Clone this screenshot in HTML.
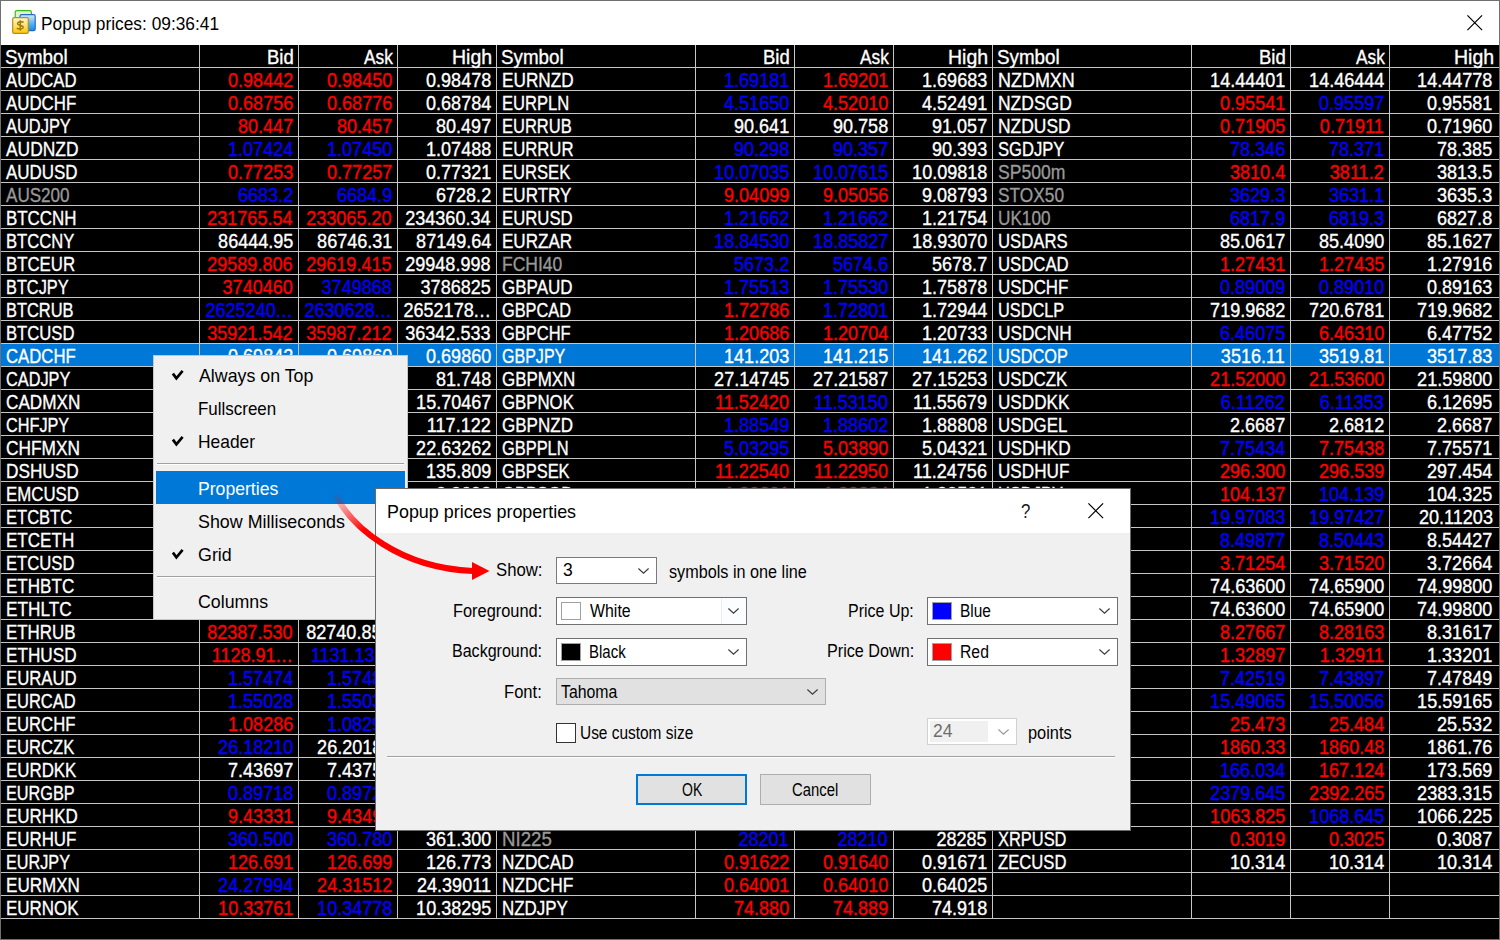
<!DOCTYPE html>
<html><head><meta charset="utf-8"><title>Popup prices</title>
<style>
*{box-sizing:border-box;margin:0;padding:0}
html,body{width:1500px;height:940px;overflow:hidden;background:#000}
body{font-family:"Liberation Sans",sans-serif;position:relative}
#win{position:absolute;left:0;top:0;width:1500px;height:940px;background:#000;overflow:hidden}
.bd{position:absolute;background:#707070}
#tb{position:absolute;left:1px;top:1px;width:1498px;height:44px;background:#fff}
.t{position:absolute;white-space:nowrap;display:block}
.hl{position:absolute;left:1px;width:1498px;height:1px;background:#c6c6c6}
.vl{position:absolute;top:45px;width:1px;height:874px;background:#c6c6c6}
.s,.n{position:absolute;height:22px;line-height:22px;font-size:20px;white-space:nowrap;color:#fff}
.s{transform-origin:0 50%;transform:scaleX(0.843)}
.n{transform-origin:100% 50%;transform:scaleX(0.903);text-align:right}
.k,.n{-webkit-text-stroke:0.35px}
.e{letter-spacing:0.8px}
.r{color:#f00}.b{color:#00f}.g{color:#808080}
.a{position:absolute;display:block}
.x{position:absolute;white-space:nowrap;transform-origin:0 50%}
</style></head>
<body>
<div id="win">
<div style="position:absolute;left:1px;top:344px;width:1498px;height:22px;background:#0078d7"></div>
<div class="hl" style="top:67px"></div>
<div class="hl" style="top:90px"></div>
<div class="hl" style="top:113px"></div>
<div class="hl" style="top:136px"></div>
<div class="hl" style="top:159px"></div>
<div class="hl" style="top:182px"></div>
<div class="hl" style="top:205px"></div>
<div class="hl" style="top:228px"></div>
<div class="hl" style="top:251px"></div>
<div class="hl" style="top:274px"></div>
<div class="hl" style="top:297px"></div>
<div class="hl" style="top:320px"></div>
<div class="hl" style="top:343px"></div>
<div class="hl" style="top:366px"></div>
<div class="hl" style="top:389px"></div>
<div class="hl" style="top:412px"></div>
<div class="hl" style="top:435px"></div>
<div class="hl" style="top:458px"></div>
<div class="hl" style="top:481px"></div>
<div class="hl" style="top:504px"></div>
<div class="hl" style="top:527px"></div>
<div class="hl" style="top:550px"></div>
<div class="hl" style="top:573px"></div>
<div class="hl" style="top:596px"></div>
<div class="hl" style="top:619px"></div>
<div class="hl" style="top:642px"></div>
<div class="hl" style="top:665px"></div>
<div class="hl" style="top:688px"></div>
<div class="hl" style="top:711px"></div>
<div class="hl" style="top:734px"></div>
<div class="hl" style="top:757px"></div>
<div class="hl" style="top:780px"></div>
<div class="hl" style="top:803px"></div>
<div class="hl" style="top:826px"></div>
<div class="hl" style="top:849px"></div>
<div class="hl" style="top:872px"></div>
<div class="hl" style="top:895px"></div>
<div class="hl" style="top:918px"></div>
<div class="vl" style="left:199px"></div>
<div class="vl" style="left:298px"></div>
<div class="vl" style="left:397px"></div>
<div class="vl" style="left:496px"></div>
<div class="vl" style="left:695px"></div>
<div class="vl" style="left:794px"></div>
<div class="vl" style="left:893px"></div>
<div class="vl" style="left:992px"></div>
<div class="vl" style="left:1191px"></div>
<div class="vl" style="left:1290px"></div>
<div class="vl" style="left:1389px"></div>
<div class="x k" style="left:6.20px;top:69.07px;font-size:20px;line-height:22px;height:22px;color:#fff;transform:scaleX(0.8357)">AUDCAD</div>
<div class="n r" style="right:1207.0px;top:69px">0.98442</div>
<div class="n r" style="right:1108.0px;top:69px">0.98450</div>
<div class="n " style="right:1009.0px;top:69px">0.98478</div>
<div class="x k" style="left:6.20px;top:92.07px;font-size:20px;line-height:22px;height:22px;color:#fff;transform:scaleX(0.8422)">AUDCHF</div>
<div class="n r" style="right:1207.0px;top:92px">0.68756</div>
<div class="n r" style="right:1108.0px;top:92px">0.68776</div>
<div class="n " style="right:1009.0px;top:92px">0.68784</div>
<div class="x k" style="left:6.20px;top:115.07px;font-size:20px;line-height:22px;height:22px;color:#fff;transform:scaleX(0.8215)">AUDJPY</div>
<div class="n r" style="right:1207.0px;top:115px">80.447</div>
<div class="n r" style="right:1108.0px;top:115px">80.457</div>
<div class="n " style="right:1009.0px;top:115px">80.497</div>
<div class="x k" style="left:6.20px;top:138.07px;font-size:20px;line-height:22px;height:22px;color:#fff;transform:scaleX(0.8699)">AUDNZD</div>
<div class="n b" style="right:1207.0px;top:138px">1.07424</div>
<div class="n b" style="right:1108.0px;top:138px">1.07450</div>
<div class="n " style="right:1009.0px;top:138px">1.07488</div>
<div class="x k" style="left:6.20px;top:161.07px;font-size:20px;line-height:22px;height:22px;color:#fff;transform:scaleX(0.8476)">AUDUSD</div>
<div class="n r" style="right:1207.0px;top:161px">0.77253</div>
<div class="n r" style="right:1108.0px;top:161px">0.77257</div>
<div class="n " style="right:1009.0px;top:161px">0.77321</div>
<div class="x k" style="left:6.20px;top:184.07px;font-size:20px;line-height:22px;height:22px;color:#999999;transform:scaleX(0.8541)">AUS200</div>
<div class="n b" style="right:1207.0px;top:184px">6683.2</div>
<div class="n b" style="right:1108.0px;top:184px">6684.9</div>
<div class="n " style="right:1009.0px;top:184px">6728.2</div>
<div class="x k" style="left:6.05px;top:207.07px;font-size:20px;line-height:22px;height:22px;color:#fff;transform:scaleX(0.8457)">BTCCNH</div>
<div class="n r" style="right:1207.0px;top:207px">231765.54</div>
<div class="n r" style="right:1108.0px;top:207px">233065.20</div>
<div class="n " style="right:1009.0px;top:207px">234360.34</div>
<div class="x k" style="left:6.07px;top:230.07px;font-size:20px;line-height:22px;height:22px;color:#fff;transform:scaleX(0.8296)">BTCCNY</div>
<div class="n " style="right:1207.0px;top:230px">86444.95</div>
<div class="n " style="right:1108.0px;top:230px">86746.31</div>
<div class="n " style="right:1009.0px;top:230px">87149.64</div>
<div class="x k" style="left:6.06px;top:253.07px;font-size:20px;line-height:22px;height:22px;color:#fff;transform:scaleX(0.8400)">BTCEUR</div>
<div class="n r" style="right:1207.0px;top:253px">29589.806</div>
<div class="n r" style="right:1108.0px;top:253px">29619.415</div>
<div class="n " style="right:1009.0px;top:253px">29948.998</div>
<div class="x k" style="left:6.08px;top:276.07px;font-size:20px;line-height:22px;height:22px;color:#fff;transform:scaleX(0.8160)">BTCJPY</div>
<div class="n r" style="right:1207.0px;top:276px">3740460</div>
<div class="n b" style="right:1108.0px;top:276px">3749868</div>
<div class="n " style="right:1009.0px;top:276px">3786825</div>
<div class="x k" style="left:6.08px;top:299.07px;font-size:20px;line-height:22px;height:22px;color:#fff;transform:scaleX(0.8210)">BTCRUB</div>
<div class="n b" style="right:1207.0px;top:299px">2625240<span class="e">...</span></div>
<div class="n b" style="right:1108.0px;top:299px">2630628<span class="e">...</span></div>
<div class="n " style="right:1009.0px;top:299px">2652178<span class="e">...</span></div>
<div class="x k" style="left:6.07px;top:322.07px;font-size:20px;line-height:22px;height:22px;color:#fff;transform:scaleX(0.8333)">BTCUSD</div>
<div class="n r" style="right:1207.0px;top:322px">35921.542</div>
<div class="n r" style="right:1108.0px;top:322px">35987.212</div>
<div class="n " style="right:1009.0px;top:322px">36342.533</div>
<div class="x k" style="left:5.71px;top:345.07px;font-size:20px;line-height:22px;height:22px;color:#fff;transform:scaleX(0.8360)">CADCHF</div>
<div class="n " style="right:1207.0px;top:345px">0.69842</div>
<div class="n " style="right:1108.0px;top:345px">0.69860</div>
<div class="n " style="right:1009.0px;top:345px">0.69860</div>
<div class="x k" style="left:5.74px;top:368.07px;font-size:20px;line-height:22px;height:22px;color:#fff;transform:scaleX(0.8147)">CADJPY</div>
<div class="n r" style="right:1207.0px;top:368px">81.702</div>
<div class="n r" style="right:1108.0px;top:368px">81.713</div>
<div class="n " style="right:1009.0px;top:368px">81.748</div>
<div class="x k" style="left:5.69px;top:391.07px;font-size:20px;line-height:22px;height:22px;color:#fff;transform:scaleX(0.8571)">CADMXN</div>
<div class="n b" style="right:1207.0px;top:391px">15.66540</div>
<div class="n b" style="right:1108.0px;top:391px">15.68310</div>
<div class="n " style="right:1009.0px;top:391px">15.70467</div>
<div class="x k" style="left:5.74px;top:414.07px;font-size:20px;line-height:22px;height:22px;color:#fff;transform:scaleX(0.8123)">CHFJPY</div>
<div class="n r" style="right:1207.0px;top:414px">116.998</div>
<div class="n r" style="right:1108.0px;top:414px">117.012</div>
<div class="n " style="right:1009.0px;top:414px">117.122</div>
<div class="x k" style="left:5.68px;top:437.07px;font-size:20px;line-height:22px;height:22px;color:#fff;transform:scaleX(0.8657)">CHFMXN</div>
<div class="n b" style="right:1207.0px;top:437px">22.43011</div>
<div class="n b" style="right:1108.0px;top:437px">22.46240</div>
<div class="n " style="right:1009.0px;top:437px">22.63262</div>
<div class="x k" style="left:6.04px;top:460.07px;font-size:20px;line-height:22px;height:22px;color:#fff;transform:scaleX(0.8614)">DSHUSD</div>
<div class="n r" style="right:1207.0px;top:460px">133.914</div>
<div class="n r" style="right:1108.0px;top:460px">134.514</div>
<div class="n " style="right:1009.0px;top:460px">135.809</div>
<div class="x k" style="left:6.06px;top:483.07px;font-size:20px;line-height:22px;height:22px;color:#fff;transform:scaleX(0.8412)">EMCUSD</div>
<div class="n " style="right:1207.0px;top:483px">0.0665</div>
<div class="n " style="right:1108.0px;top:483px">0.0695</div>
<div class="n " style="right:1009.0px;top:483px">0.0698</div>
<div class="x k" style="left:6.07px;top:506.07px;font-size:20px;line-height:22px;height:22px;color:#fff;transform:scaleX(0.8269)">ETCBTC</div>
<div class="n b" style="right:1207.0px;top:506px">0.00021</div>
<div class="n b" style="right:1108.0px;top:506px">0.00022</div>
<div class="n " style="right:1009.0px;top:506px">0.00022</div>
<div class="x k" style="left:6.05px;top:529.07px;font-size:20px;line-height:22px;height:22px;color:#fff;transform:scaleX(0.8526)">ETCETH</div>
<div class="n b" style="right:1207.0px;top:529px">0.00652</div>
<div class="n b" style="right:1108.0px;top:529px">0.00660</div>
<div class="n " style="right:1009.0px;top:529px">0.00665</div>
<div class="x k" style="left:6.07px;top:552.07px;font-size:20px;line-height:22px;height:22px;color:#fff;transform:scaleX(0.8333)">ETCUSD</div>
<div class="n r" style="right:1207.0px;top:552px">7.399</div>
<div class="n r" style="right:1108.0px;top:552px">7.449</div>
<div class="n " style="right:1009.0px;top:552px">7.521</div>
<div class="x k" style="left:6.05px;top:575.07px;font-size:20px;line-height:22px;height:22px;color:#fff;transform:scaleX(0.8526)">ETHBTC</div>
<div class="n b" style="right:1207.0px;top:575px">0.03136</div>
<div class="n b" style="right:1108.0px;top:575px">0.03141</div>
<div class="n " style="right:1009.0px;top:575px">0.03161</div>
<div class="x k" style="left:6.04px;top:598.07px;font-size:20px;line-height:22px;height:22px;color:#fff;transform:scaleX(0.8600)">ETHLTC</div>
<div class="n r" style="right:1207.0px;top:598px">7.46021</div>
<div class="n r" style="right:1108.0px;top:598px">7.47338</div>
<div class="n " style="right:1009.0px;top:598px">7.51210</div>
<div class="x k" style="left:6.05px;top:621.07px;font-size:20px;line-height:22px;height:22px;color:#fff;transform:scaleX(0.8457)">ETHRUB</div>
<div class="n r" style="right:1207.0px;top:621px">82387.530</div>
<div class="n " style="right:1108.0px;top:621px">82740.850</div>
<div class="n " style="right:1009.0px;top:621px">83610.155</div>
<div class="x k" style="left:6.04px;top:644.07px;font-size:20px;line-height:22px;height:22px;color:#fff;transform:scaleX(0.8580)">ETHUSD</div>
<div class="n r" style="right:1207.0px;top:644px">1128.91<span class="e">...</span></div>
<div class="n b" style="right:1108.0px;top:644px">1131.13<span class="e">...</span></div>
<div class="n " style="right:1009.0px;top:644px">1145.27<span class="e">...</span></div>
<div class="x k" style="left:6.06px;top:667.07px;font-size:20px;line-height:22px;height:22px;color:#fff;transform:scaleX(0.8373)">EURAUD</div>
<div class="n b" style="right:1207.0px;top:667px">1.57474</div>
<div class="n b" style="right:1108.0px;top:667px">1.57489</div>
<div class="n " style="right:1009.0px;top:667px">1.57731</div>
<div class="x k" style="left:6.07px;top:690.07px;font-size:20px;line-height:22px;height:22px;color:#fff;transform:scaleX(0.8253)">EURCAD</div>
<div class="n b" style="right:1207.0px;top:690px">1.55028</div>
<div class="n b" style="right:1108.0px;top:690px">1.55035</div>
<div class="n " style="right:1009.0px;top:690px">1.55403</div>
<div class="x k" style="left:6.07px;top:713.07px;font-size:20px;line-height:22px;height:22px;color:#fff;transform:scaleX(0.8317)">EURCHF</div>
<div class="n r" style="right:1207.0px;top:713px">1.08286</div>
<div class="n b" style="right:1108.0px;top:713px">1.08293</div>
<div class="n " style="right:1009.0px;top:713px">1.08394</div>
<div class="x k" style="left:6.07px;top:736.07px;font-size:20px;line-height:22px;height:22px;color:#fff;transform:scaleX(0.8296)">EURCZK</div>
<div class="n b" style="right:1207.0px;top:736px">26.18210</div>
<div class="n " style="right:1108.0px;top:736px">26.20180</div>
<div class="n " style="right:1009.0px;top:736px">26.24120</div>
<div class="x k" style="left:6.06px;top:759.07px;font-size:20px;line-height:22px;height:22px;color:#fff;transform:scaleX(0.8439)">EURDKK</div>
<div class="n " style="right:1207.0px;top:759px">7.43697</div>
<div class="n " style="right:1108.0px;top:759px">7.43755</div>
<div class="n " style="right:1009.0px;top:759px">7.43915</div>
<div class="x k" style="left:6.09px;top:782.07px;font-size:20px;line-height:22px;height:22px;color:#fff;transform:scaleX(0.8133)">EURGBP</div>
<div class="n b" style="right:1207.0px;top:782px">0.89718</div>
<div class="n b" style="right:1108.0px;top:782px">0.89725</div>
<div class="n " style="right:1009.0px;top:782px">0.90012</div>
<div class="x k" style="left:6.05px;top:805.07px;font-size:20px;line-height:22px;height:22px;color:#fff;transform:scaleX(0.8494)">EURHKD</div>
<div class="n r" style="right:1207.0px;top:805px">9.43331</div>
<div class="n r" style="right:1108.0px;top:805px">9.43493</div>
<div class="n " style="right:1009.0px;top:805px">9.44102</div>
<div class="x k" style="left:6.06px;top:828.07px;font-size:20px;line-height:22px;height:22px;color:#fff;transform:scaleX(0.8439)">EURHUF</div>
<div class="n b" style="right:1207.0px;top:828px">360.500</div>
<div class="n b" style="right:1108.0px;top:828px">360.780</div>
<div class="n " style="right:1009.0px;top:828px">361.300</div>
<div class="x k" style="left:6.09px;top:851.07px;font-size:20px;line-height:22px;height:22px;color:#fff;transform:scaleX(0.8103)">EURJPY</div>
<div class="n r" style="right:1207.0px;top:851px">126.691</div>
<div class="n r" style="right:1108.0px;top:851px">126.699</div>
<div class="n " style="right:1009.0px;top:851px">126.773</div>
<div class="x k" style="left:6.05px;top:874.07px;font-size:20px;line-height:22px;height:22px;color:#fff;transform:scaleX(0.8529)">EURMXN</div>
<div class="n b" style="right:1207.0px;top:874px">24.27994</div>
<div class="n r" style="right:1108.0px;top:874px">24.31512</div>
<div class="n " style="right:1009.0px;top:874px">24.39011</div>
<div class="x k" style="left:6.05px;top:897.07px;font-size:20px;line-height:22px;height:22px;color:#fff;transform:scaleX(0.8476)">EURNOK</div>
<div class="n r" style="right:1207.0px;top:897px">10.33761</div>
<div class="n b" style="right:1108.0px;top:897px">10.34778</div>
<div class="n " style="right:1009.0px;top:897px">10.38295</div>
<div class="x k" style="left:502.04px;top:69.07px;font-size:20px;line-height:22px;height:22px;color:#fff;transform:scaleX(0.8598)">EURNZD</div>
<div class="n b" style="right:711.0px;top:69px">1.69181</div>
<div class="n r" style="right:612.0px;top:69px">1.69201</div>
<div class="n " style="right:513.0px;top:69px">1.69683</div>
<div class="x k" style="left:502.07px;top:92.07px;font-size:20px;line-height:22px;height:22px;color:#fff;transform:scaleX(0.8291)">EURPLN</div>
<div class="n b" style="right:711.0px;top:92px">4.51650</div>
<div class="n r" style="right:612.0px;top:92px">4.52010</div>
<div class="n " style="right:513.0px;top:92px">4.52491</div>
<div class="x k" style="left:502.07px;top:115.07px;font-size:20px;line-height:22px;height:22px;color:#fff;transform:scaleX(0.8253)">EURRUB</div>
<div class="n " style="right:711.0px;top:115px">90.641</div>
<div class="n " style="right:612.0px;top:115px">90.758</div>
<div class="n " style="right:513.0px;top:115px">91.057</div>
<div class="x k" style="left:502.06px;top:138.07px;font-size:20px;line-height:22px;height:22px;color:#fff;transform:scaleX(0.8357)">EURRUR</div>
<div class="n b" style="right:711.0px;top:138px">90.298</div>
<div class="n b" style="right:612.0px;top:138px">90.357</div>
<div class="n " style="right:513.0px;top:138px">90.393</div>
<div class="x k" style="left:502.07px;top:161.07px;font-size:20px;line-height:22px;height:22px;color:#fff;transform:scaleX(0.8296)">EURSEK</div>
<div class="n b" style="right:711.0px;top:161px">10.07035</div>
<div class="n b" style="right:612.0px;top:161px">10.07615</div>
<div class="n " style="right:513.0px;top:161px">10.09818</div>
<div class="x k" style="left:502.05px;top:184.07px;font-size:20px;line-height:22px;height:22px;color:#fff;transform:scaleX(0.8525)">EURTRY</div>
<div class="n r" style="right:711.0px;top:184px">9.04099</div>
<div class="n r" style="right:612.0px;top:184px">9.05056</div>
<div class="n " style="right:513.0px;top:184px">9.08793</div>
<div class="x k" style="left:502.06px;top:207.07px;font-size:20px;line-height:22px;height:22px;color:#fff;transform:scaleX(0.8373)">EURUSD</div>
<div class="n b" style="right:711.0px;top:207px">1.21662</div>
<div class="n b" style="right:612.0px;top:207px">1.21662</div>
<div class="n " style="right:513.0px;top:207px">1.21754</div>
<div class="x k" style="left:502.05px;top:230.07px;font-size:20px;line-height:22px;height:22px;color:#fff;transform:scaleX(0.8525)">EURZAR</div>
<div class="n b" style="right:711.0px;top:230px">18.84530</div>
<div class="n b" style="right:612.0px;top:230px">18.85827</div>
<div class="n " style="right:513.0px;top:230px">18.93070</div>
<div class="x k" style="left:502.02px;top:253.07px;font-size:20px;line-height:22px;height:22px;color:#999999;transform:scaleX(0.8750)">FCHI40</div>
<div class="n b" style="right:711.0px;top:253px">5673.2</div>
<div class="n b" style="right:612.0px;top:253px">5674.6</div>
<div class="n " style="right:513.0px;top:253px">5678.7</div>
<div class="x k" style="left:501.70px;top:276.07px;font-size:20px;line-height:22px;height:22px;color:#fff;transform:scaleX(0.8500)">GBPAUD</div>
<div class="n b" style="right:711.0px;top:276px">1.75513</div>
<div class="n b" style="right:612.0px;top:276px">1.75530</div>
<div class="n " style="right:513.0px;top:276px">1.75878</div>
<div class="x k" style="left:501.73px;top:299.07px;font-size:20px;line-height:22px;height:22px;color:#fff;transform:scaleX(0.8175)">GBPCAD</div>
<div class="n r" style="right:711.0px;top:299px">1.72786</div>
<div class="n b" style="right:612.0px;top:299px">1.72801</div>
<div class="n " style="right:513.0px;top:299px">1.72944</div>
<div class="x k" style="left:501.73px;top:322.07px;font-size:20px;line-height:22px;height:22px;color:#fff;transform:scaleX(0.8238)">GBPCHF</div>
<div class="n r" style="right:711.0px;top:322px">1.20686</div>
<div class="n r" style="right:612.0px;top:322px">1.20704</div>
<div class="n " style="right:513.0px;top:322px">1.20733</div>
<div class="x k" style="left:501.75px;top:345.07px;font-size:20px;line-height:22px;height:22px;color:#fff;transform:scaleX(0.8019)">GBPJPY</div>
<div class="n " style="right:711.0px;top:345px">141.203</div>
<div class="n " style="right:612.0px;top:345px">141.215</div>
<div class="n " style="right:513.0px;top:345px">141.262</div>
<div class="x k" style="left:501.70px;top:368.07px;font-size:20px;line-height:22px;height:22px;color:#fff;transform:scaleX(0.8453)">GBPMXN</div>
<div class="n " style="right:711.0px;top:368px">27.14745</div>
<div class="n " style="right:612.0px;top:368px">27.21587</div>
<div class="n " style="right:513.0px;top:368px">27.15253</div>
<div class="x k" style="left:501.71px;top:391.07px;font-size:20px;line-height:22px;height:22px;color:#fff;transform:scaleX(0.8399)">GBPNOK</div>
<div class="n r" style="right:711.0px;top:391px">11.52420</div>
<div class="n b" style="right:612.0px;top:391px">11.53150</div>
<div class="n " style="right:513.0px;top:391px">11.55679</div>
<div class="x k" style="left:501.70px;top:414.07px;font-size:20px;line-height:22px;height:22px;color:#fff;transform:scaleX(0.8518)">GBPNZD</div>
<div class="n b" style="right:711.0px;top:414px">1.88549</div>
<div class="n b" style="right:612.0px;top:414px">1.88602</div>
<div class="n " style="right:513.0px;top:414px">1.88808</div>
<div class="x k" style="left:501.73px;top:437.07px;font-size:20px;line-height:22px;height:22px;color:#fff;transform:scaleX(0.8209)">GBPPLN</div>
<div class="n b" style="right:711.0px;top:437px">5.03295</div>
<div class="n r" style="right:612.0px;top:437px">5.03890</div>
<div class="n " style="right:513.0px;top:437px">5.04321</div>
<div class="x k" style="left:501.73px;top:460.07px;font-size:20px;line-height:22px;height:22px;color:#fff;transform:scaleX(0.8216)">GBPSEK</div>
<div class="n r" style="right:711.0px;top:460px">11.22540</div>
<div class="n r" style="right:612.0px;top:460px">11.22950</div>
<div class="n " style="right:513.0px;top:460px">11.24756</div>
<div class="x k" style="left:501.72px;top:483.07px;font-size:20px;line-height:22px;height:22px;color:#fff;transform:scaleX(0.8315)">GBPSGD</div>
<div class="n r" style="right:711.0px;top:483px">1.80291</div>
<div class="n r" style="right:612.0px;top:483px">1.80334</div>
<div class="n " style="right:513.0px;top:483px">1.80501</div>
<div class="x k" style="left:501.72px;top:506.07px;font-size:20px;line-height:22px;height:22px;color:#fff;transform:scaleX(0.8295)">GBPUSD</div>
<div class="n b" style="right:711.0px;top:506px">1.35601</div>
<div class="n b" style="right:612.0px;top:506px">1.35608</div>
<div class="n " style="right:513.0px;top:506px">1.35840</div>
<div class="x k" style="left:501.69px;top:529.07px;font-size:20px;line-height:22px;height:22px;color:#999999;transform:scaleX(0.8570)">GER30</div>
<div class="n b" style="right:711.0px;top:529px">13885.1</div>
<div class="n b" style="right:612.0px;top:529px">13886.1</div>
<div class="n " style="right:513.0px;top:529px">13912.5</div>
<div class="x k" style="left:502.06px;top:552.07px;font-size:20px;line-height:22px;height:22px;color:#fff;transform:scaleX(0.8359)">HKDJPY</div>
<div class="n r" style="right:711.0px;top:552px">13.422</div>
<div class="n r" style="right:612.0px;top:552px">13.430</div>
<div class="n " style="right:513.0px;top:552px">13.441</div>
<div class="x k" style="left:502.07px;top:575.07px;font-size:20px;line-height:22px;height:22px;color:#fff;transform:scaleX(0.8333)">LTCBTC</div>
<div class="n b" style="right:711.0px;top:575px">0.00420</div>
<div class="n b" style="right:612.0px;top:575px">0.00421</div>
<div class="n " style="right:513.0px;top:575px">0.00424</div>
<div class="x k" style="left:502.05px;top:598.07px;font-size:20px;line-height:22px;height:22px;color:#fff;transform:scaleX(0.8506)">LTCUSD</div>
<div class="n r" style="right:711.0px;top:598px">151.320</div>
<div class="n r" style="right:612.0px;top:598px">151.820</div>
<div class="n " style="right:513.0px;top:598px">154.210</div>
<div class="x k" style="left:502.06px;top:621.07px;font-size:20px;line-height:22px;height:22px;color:#fff;transform:scaleX(0.8400)">MXNJPY</div>
<div class="n r" style="right:711.0px;top:621px">5.205</div>
<div class="n r" style="right:612.0px;top:621px">5.225</div>
<div class="n " style="right:513.0px;top:621px">5.244</div>
<div class="x k" style="left:502.03px;top:644.07px;font-size:20px;line-height:22px;height:22px;color:#999999;transform:scaleX(0.8699)">NAS100</div>
<div class="n b" style="right:711.0px;top:644px">13075.3</div>
<div class="n b" style="right:612.0px;top:644px">13076.5</div>
<div class="n " style="right:513.0px;top:644px">13105.2</div>
<div class="x k" style="left:502.07px;top:667.07px;font-size:20px;line-height:22px;height:22px;color:#fff;transform:scaleX(0.8253)">NOKJPY</div>
<div class="n r" style="right:711.0px;top:667px">12.238</div>
<div class="n r" style="right:612.0px;top:667px">12.262</div>
<div class="n " style="right:513.0px;top:667px">12.275</div>
<div class="x k" style="left:502.06px;top:690.07px;font-size:20px;line-height:22px;height:22px;color:#fff;transform:scaleX(0.8439)">NOKSEK</div>
<div class="n b" style="right:711.0px;top:690px">0.97308</div>
<div class="n b" style="right:612.0px;top:690px">0.97562</div>
<div class="n " style="right:513.0px;top:690px">0.97701</div>
<div class="x k" style="left:502.03px;top:713.07px;font-size:20px;line-height:22px;height:22px;color:#fff;transform:scaleX(0.8720)">NZDAUD</div>
<div class="n r" style="right:711.0px;top:713px">0.93110</div>
<div class="n r" style="right:612.0px;top:713px">0.93142</div>
<div class="n " style="right:513.0px;top:713px">0.93255</div>
<div class="x k" style="left:501.72px;top:736.07px;font-size:20px;line-height:22px;height:22px;color:#fff;transform:scaleX(0.8340)">GBPTRY</div>
<div class="n b" style="right:711.0px;top:736px">10.06810</div>
<div class="n b" style="right:612.0px;top:736px">10.08902</div>
<div class="n " style="right:513.0px;top:736px">10.13400</div>
<div class="x k" style="left:501.71px;top:759.07px;font-size:20px;line-height:22px;height:22px;color:#fff;transform:scaleX(0.8444)">GBPZAR</div>
<div class="n b" style="right:711.0px;top:759px">20.99510</div>
<div class="n b" style="right:612.0px;top:759px">21.01727</div>
<div class="n " style="right:513.0px;top:759px">21.13050</div>
<div class="x k" style="left:502.04px;top:782.07px;font-size:20px;line-height:22px;height:22px;color:#fff;transform:scaleX(0.8614)">MBTUSD</div>
<div class="n r" style="right:711.0px;top:782px">35.921</div>
<div class="n r" style="right:612.0px;top:782px">35.987</div>
<div class="n " style="right:513.0px;top:782px">36.342</div>
<div class="x k" style="left:502.02px;top:805.07px;font-size:20px;line-height:22px;height:22px;color:#fff;transform:scaleX(0.8841)">NZDHKD</div>
<div class="n b" style="right:711.0px;top:805px">5.57011</div>
<div class="n b" style="right:612.0px;top:805px">5.57402</div>
<div class="n " style="right:513.0px;top:805px">5.58120</div>
<div class="x k" style="left:501.97px;top:828.07px;font-size:20px;line-height:22px;height:22px;color:#999999;transform:scaleX(0.9327)">NI225</div>
<div class="n b" style="right:711.0px;top:828px">28201</div>
<div class="n b" style="right:612.0px;top:828px">28210</div>
<div class="n " style="right:513.0px;top:828px">28285</div>
<div class="x k" style="left:502.04px;top:851.07px;font-size:20px;line-height:22px;height:22px;color:#fff;transform:scaleX(0.8598)">NZDCAD</div>
<div class="n r" style="right:711.0px;top:851px">0.91622</div>
<div class="n r" style="right:612.0px;top:851px">0.91640</div>
<div class="n " style="right:513.0px;top:851px">0.91671</div>
<div class="x k" style="left:502.03px;top:874.07px;font-size:20px;line-height:22px;height:22px;color:#fff;transform:scaleX(0.8667)">NZDCHF</div>
<div class="n r" style="right:711.0px;top:874px">0.64001</div>
<div class="n r" style="right:612.0px;top:874px">0.64010</div>
<div class="n " style="right:513.0px;top:874px">0.64025</div>
<div class="x k" style="left:502.05px;top:897.07px;font-size:20px;line-height:22px;height:22px;color:#fff;transform:scaleX(0.8468)">NZDJPY</div>
<div class="n r" style="right:711.0px;top:897px">74.880</div>
<div class="n r" style="right:612.0px;top:897px">74.889</div>
<div class="n " style="right:513.0px;top:897px">74.918</div>
<div class="x k" style="left:998.00px;top:69.07px;font-size:20px;line-height:22px;height:22px;color:#fff;transform:scaleX(0.8976)">NZDMXN</div>
<div class="n " style="right:215.0px;top:69px">14.44401</div>
<div class="n " style="right:116.0px;top:69px">14.46444</div>
<div class="n " style="right:7.5px;top:69px">14.44778</div>
<div class="x k" style="left:998.03px;top:92.07px;font-size:20px;line-height:22px;height:22px;color:#fff;transform:scaleX(0.8735)">NZDSGD</div>
<div class="n r" style="right:215.0px;top:92px">0.95541</div>
<div class="n b" style="right:116.0px;top:92px">0.95597</div>
<div class="n " style="right:7.5px;top:92px">0.95581</div>
<div class="x k" style="left:998.03px;top:115.07px;font-size:20px;line-height:22px;height:22px;color:#fff;transform:scaleX(0.8720)">NZDUSD</div>
<div class="n r" style="right:215.0px;top:115px">0.71905</div>
<div class="n r" style="right:116.0px;top:115px">0.71911</div>
<div class="n " style="right:7.5px;top:115px">0.71960</div>
<div class="x k" style="left:997.72px;top:138.07px;font-size:20px;line-height:22px;height:22px;color:#fff;transform:scaleX(0.8297)">SGDJPY</div>
<div class="n b" style="right:215.0px;top:138px">78.346</div>
<div class="n b" style="right:116.0px;top:138px">78.371</div>
<div class="n " style="right:7.5px;top:138px">78.385</div>
<div class="x k" style="left:997.67px;top:161.07px;font-size:20px;line-height:22px;height:22px;color:#999999;transform:scaleX(0.8780)">SP500m</div>
<div class="n r" style="right:215.0px;top:161px">3810.4</div>
<div class="n r" style="right:116.0px;top:161px">3811.2</div>
<div class="n " style="right:7.5px;top:161px">3813.5</div>
<div class="x k" style="left:997.69px;top:184.07px;font-size:20px;line-height:22px;height:22px;color:#999999;transform:scaleX(0.8647)">STOX50</div>
<div class="n b" style="right:215.0px;top:184px">3629.3</div>
<div class="n b" style="right:116.0px;top:184px">3631.1</div>
<div class="n " style="right:7.5px;top:184px">3635.3</div>
<div class="x k" style="left:998.04px;top:207.07px;font-size:20px;line-height:22px;height:22px;color:#999999;transform:scaleX(0.8583)">UK100</div>
<div class="n b" style="right:215.0px;top:207px">6817.9</div>
<div class="n b" style="right:116.0px;top:207px">6819.3</div>
<div class="n " style="right:7.5px;top:207px">6827.8</div>
<div class="x k" style="left:998.06px;top:230.07px;font-size:20px;line-height:22px;height:22px;color:#fff;transform:scaleX(0.8354)">USDARS</div>
<div class="n " style="right:215.0px;top:230px">85.0617</div>
<div class="n " style="right:116.0px;top:230px">85.4090</div>
<div class="n " style="right:7.5px;top:230px">85.1627</div>
<div class="x k" style="left:998.06px;top:253.07px;font-size:20px;line-height:22px;height:22px;color:#fff;transform:scaleX(0.8373)">USDCAD</div>
<div class="n r" style="right:215.0px;top:253px">1.27431</div>
<div class="n r" style="right:116.0px;top:253px">1.27435</div>
<div class="n " style="right:7.5px;top:253px">1.27916</div>
<div class="x k" style="left:998.06px;top:276.07px;font-size:20px;line-height:22px;height:22px;color:#fff;transform:scaleX(0.8439)">USDCHF</div>
<div class="n b" style="right:215.0px;top:276px">0.89009</div>
<div class="n b" style="right:116.0px;top:276px">0.89010</div>
<div class="n " style="right:7.5px;top:276px">0.89163</div>
<div class="x k" style="left:998.08px;top:299.07px;font-size:20px;line-height:22px;height:22px;color:#fff;transform:scaleX(0.8165)">USDCLP</div>
<div class="n " style="right:215.0px;top:299px">719.9682</div>
<div class="n " style="right:116.0px;top:299px">720.6781</div>
<div class="n " style="right:7.5px;top:299px">719.9682</div>
<div class="x k" style="left:998.04px;top:322.07px;font-size:20px;line-height:22px;height:22px;color:#fff;transform:scaleX(0.8614)">USDCNH</div>
<div class="n b" style="right:215.0px;top:322px">6.46075</div>
<div class="n r" style="right:116.0px;top:322px">6.46310</div>
<div class="n " style="right:7.5px;top:322px">6.47752</div>
<div class="x k" style="left:998.08px;top:345.07px;font-size:20px;line-height:22px;height:22px;color:#fff;transform:scaleX(0.8155)">USDCOP</div>
<div class="n " style="right:215.0px;top:345px">3516.11</div>
<div class="n " style="right:116.0px;top:345px">3519.81</div>
<div class="n " style="right:7.5px;top:345px">3517.83</div>
<div class="x k" style="left:998.06px;top:368.07px;font-size:20px;line-height:22px;height:22px;color:#fff;transform:scaleX(0.8420)">USDCZK</div>
<div class="n r" style="right:215.0px;top:368px">21.52000</div>
<div class="n r" style="right:116.0px;top:368px">21.53600</div>
<div class="n " style="right:7.5px;top:368px">21.59800</div>
<div class="x k" style="left:998.04px;top:391.07px;font-size:20px;line-height:22px;height:22px;color:#fff;transform:scaleX(0.8561)">USDDKK</div>
<div class="n b" style="right:215.0px;top:391px">6.11262</div>
<div class="n b" style="right:116.0px;top:391px">6.11353</div>
<div class="n " style="right:7.5px;top:391px">6.12695</div>
<div class="x k" style="left:998.06px;top:414.07px;font-size:20px;line-height:22px;height:22px;color:#fff;transform:scaleX(0.8420)">USDGEL</div>
<div class="n " style="right:215.0px;top:414px">2.6687</div>
<div class="n " style="right:116.0px;top:414px">2.6812</div>
<div class="n " style="right:7.5px;top:414px">2.6687</div>
<div class="x k" style="left:998.04px;top:437.07px;font-size:20px;line-height:22px;height:22px;color:#fff;transform:scaleX(0.8614)">USDHKD</div>
<div class="n b" style="right:215.0px;top:437px">7.75434</div>
<div class="n r" style="right:116.0px;top:437px">7.75438</div>
<div class="n " style="right:7.5px;top:437px">7.75571</div>
<div class="x k" style="left:998.04px;top:460.07px;font-size:20px;line-height:22px;height:22px;color:#fff;transform:scaleX(0.8561)">USDHUF</div>
<div class="n r" style="right:215.0px;top:460px">296.300</div>
<div class="n r" style="right:116.0px;top:460px">296.539</div>
<div class="n " style="right:7.5px;top:460px">297.454</div>
<div class="x k" style="left:998.08px;top:483.07px;font-size:20px;line-height:22px;height:22px;color:#fff;transform:scaleX(0.8231)">USDJPY</div>
<div class="n r" style="right:215.0px;top:483px">104.137</div>
<div class="n b" style="right:116.0px;top:483px">104.139</div>
<div class="n " style="right:7.5px;top:483px">104.325</div>
<div class="x k" style="left:998.04px;top:506.07px;font-size:20px;line-height:22px;height:22px;color:#fff;transform:scaleX(0.8647)">USDMXN</div>
<div class="n b" style="right:215.0px;top:506px">19.97083</div>
<div class="n b" style="right:116.0px;top:506px">19.97427</div>
<div class="n " style="right:7.5px;top:506px">20.11203</div>
<div class="x k" style="left:998.04px;top:529.07px;font-size:20px;line-height:22px;height:22px;color:#fff;transform:scaleX(0.8595)">USDNOK</div>
<div class="n b" style="right:215.0px;top:529px">8.49877</div>
<div class="n b" style="right:116.0px;top:529px">8.50443</div>
<div class="n " style="right:7.5px;top:529px">8.54427</div>
<div class="x k" style="left:998.06px;top:552.07px;font-size:20px;line-height:22px;height:22px;color:#fff;transform:scaleX(0.8418)">USDPLN</div>
<div class="n r" style="right:215.0px;top:552px">3.71254</div>
<div class="n r" style="right:116.0px;top:552px">3.71520</div>
<div class="n " style="right:7.5px;top:552px">3.72664</div>
<div class="x k" style="left:998.06px;top:575.07px;font-size:20px;line-height:22px;height:22px;color:#fff;transform:scaleX(0.8373)">USDRUB</div>
<div class="n " style="right:215.0px;top:575px">74.63600</div>
<div class="n " style="right:116.0px;top:575px">74.65900</div>
<div class="n " style="right:7.5px;top:575px">74.99800</div>
<div class="x k" style="left:998.05px;top:598.07px;font-size:20px;line-height:22px;height:22px;color:#fff;transform:scaleX(0.8476)">USDRUR</div>
<div class="n " style="right:215.0px;top:598px">74.63600</div>
<div class="n " style="right:116.0px;top:598px">74.65900</div>
<div class="n " style="right:7.5px;top:598px">74.99800</div>
<div class="x k" style="left:998.06px;top:621.07px;font-size:20px;line-height:22px;height:22px;color:#fff;transform:scaleX(0.8420)">USDSEK</div>
<div class="n r" style="right:215.0px;top:621px">8.27667</div>
<div class="n r" style="right:116.0px;top:621px">8.28163</div>
<div class="n " style="right:7.5px;top:621px">8.31617</div>
<div class="x k" style="left:998.05px;top:644.07px;font-size:20px;line-height:22px;height:22px;color:#fff;transform:scaleX(0.8512)">USDSGD</div>
<div class="n r" style="right:215.0px;top:644px">1.32897</div>
<div class="n r" style="right:116.0px;top:644px">1.32911</div>
<div class="n " style="right:7.5px;top:644px">1.33201</div>
<div class="x k" style="left:998.05px;top:667.07px;font-size:20px;line-height:22px;height:22px;color:#fff;transform:scaleX(0.8543)">USDTRY</div>
<div class="n b" style="right:215.0px;top:667px">7.42519</div>
<div class="n b" style="right:116.0px;top:667px">7.43897</div>
<div class="n " style="right:7.5px;top:667px">7.47849</div>
<div class="x k" style="left:998.03px;top:690.07px;font-size:20px;line-height:22px;height:22px;color:#fff;transform:scaleX(0.8650)">USDZAR</div>
<div class="n b" style="right:215.0px;top:690px">15.49065</div>
<div class="n b" style="right:116.0px;top:690px">15.50056</div>
<div class="n " style="right:7.5px;top:690px">15.59165</div>
<div class="x k" style="left:998.20px;top:713.07px;font-size:20px;line-height:22px;height:22px;color:#fff;transform:scaleX(0.8357)">XAGUSD</div>
<div class="n r" style="right:215.0px;top:713px">25.473</div>
<div class="n r" style="right:116.0px;top:713px">25.484</div>
<div class="n " style="right:7.5px;top:713px">25.532</div>
<div class="x k" style="left:998.20px;top:736.07px;font-size:20px;line-height:22px;height:22px;color:#fff;transform:scaleX(0.8337)">XAUUSD</div>
<div class="n r" style="right:215.0px;top:736px">1860.33</div>
<div class="n r" style="right:116.0px;top:736px">1860.48</div>
<div class="n " style="right:7.5px;top:736px">1861.76</div>
<div class="x k" style="left:998.20px;top:759.07px;font-size:20px;line-height:22px;height:22px;color:#fff;transform:scaleX(0.8512)">XMRUSD</div>
<div class="n b" style="right:215.0px;top:759px">166.034</div>
<div class="n r" style="right:116.0px;top:759px">167.124</div>
<div class="n " style="right:7.5px;top:759px">173.569</div>
<div class="x k" style="left:998.20px;top:782.07px;font-size:20px;line-height:22px;height:22px;color:#fff;transform:scaleX(0.8337)">XPDUSD</div>
<div class="n b" style="right:215.0px;top:782px">2379.645</div>
<div class="n r" style="right:116.0px;top:782px">2392.265</div>
<div class="n " style="right:7.5px;top:782px">2383.315</div>
<div class="x k" style="left:998.20px;top:805.07px;font-size:20px;line-height:22px;height:22px;color:#fff;transform:scaleX(0.8296)">XPTUSD</div>
<div class="n r" style="right:215.0px;top:805px">1063.825</div>
<div class="n b" style="right:116.0px;top:805px">1068.645</div>
<div class="n " style="right:7.5px;top:805px">1066.225</div>
<div class="x k" style="left:998.20px;top:828.07px;font-size:20px;line-height:22px;height:22px;color:#fff;transform:scaleX(0.8217)">XRPUSD</div>
<div class="n r" style="right:215.0px;top:828px">0.3019</div>
<div class="n r" style="right:116.0px;top:828px">0.3025</div>
<div class="n " style="right:7.5px;top:828px">0.3087</div>
<div class="x k" style="left:998.20px;top:851.07px;font-size:20px;line-height:22px;height:22px;color:#fff;transform:scaleX(0.8317)">ZECUSD</div>
<div class="n " style="right:215.0px;top:851px">10.314</div>
<div class="n " style="right:116.0px;top:851px">10.314</div>
<div class="n " style="right:7.5px;top:851px">10.314</div>
<div class="x k" style="left:5.06px;top:46.07px;font-size:20px;line-height:22px;height:22px;color:#fff;transform:scaleX(0.9385)">Symbol</div>
<div class="x k" style="left:266.57px;top:46.07px;font-size:20px;line-height:22px;height:22px;color:#fff;transform:scaleX(0.9259)">Bid</div>
<div class="x k" style="left:364.00px;top:46.07px;font-size:20px;line-height:22px;height:22px;color:#fff;transform:scaleX(0.8636)">Ask</div>
<div class="x k" style="left:452.03px;top:46.07px;font-size:20px;line-height:22px;height:22px;color:#fff;transform:scaleX(0.9744)">High</div>
<div class="x k" style="left:501.06px;top:46.07px;font-size:20px;line-height:22px;height:22px;color:#fff;transform:scaleX(0.9385)">Symbol</div>
<div class="x k" style="left:762.57px;top:46.07px;font-size:20px;line-height:22px;height:22px;color:#fff;transform:scaleX(0.9259)">Bid</div>
<div class="x k" style="left:860.00px;top:46.07px;font-size:20px;line-height:22px;height:22px;color:#fff;transform:scaleX(0.8636)">Ask</div>
<div class="x k" style="left:948.03px;top:46.07px;font-size:20px;line-height:22px;height:22px;color:#fff;transform:scaleX(0.9744)">High</div>
<div class="x k" style="left:997.06px;top:46.07px;font-size:20px;line-height:22px;height:22px;color:#fff;transform:scaleX(0.9385)">Symbol</div>
<div class="x k" style="left:1258.57px;top:46.07px;font-size:20px;line-height:22px;height:22px;color:#fff;transform:scaleX(0.9259)">Bid</div>
<div class="x k" style="left:1356.00px;top:46.07px;font-size:20px;line-height:22px;height:22px;color:#fff;transform:scaleX(0.8636)">Ask</div>
<div class="x k" style="left:1454.03px;top:46.07px;font-size:20px;line-height:22px;height:22px;color:#fff;transform:scaleX(0.9744)">High</div>
<div id="tb"></div>
<svg class="a" style="left:11px;top:9px" width="27" height="26" viewBox="11 9 27 26">
<defs>
<linearGradient id="gB" x1="0" y1="0" x2="0" y2="1"><stop offset="0" stop-color="#d8ecfc"/><stop offset="0.55" stop-color="#58b4f6"/><stop offset="1" stop-color="#0a8ff2"/></linearGradient>
<linearGradient id="gY" x1="0" y1="0" x2="0" y2="1"><stop offset="0" stop-color="#fff6d2"/><stop offset="0.5" stop-color="#ffe173"/><stop offset="1" stop-color="#ffc800"/></linearGradient>
</defs>
<rect x="15.2" y="10.6" width="16.2" height="14" rx="1.6" fill="#dcf6c6" stroke="#3cb826" stroke-width="1.2"/>
<rect x="20" y="14.6" width="15.2" height="16" rx="1.6" fill="url(#gB)" stroke="#2c66c8" stroke-width="1.2"/>
<rect x="12.7" y="17.7" width="15.6" height="15.6" rx="1.4" fill="url(#gY)" stroke="#b58f1a" stroke-width="1.2"/>
<path d="M23.6,22.4 C22.6,21.5 19.6,21.3 18.2,22.4 C16.6,23.8 18,25 20.3,25.4 C22.8,25.9 24,26.9 22.7,28.3 C21.4,29.5 18.2,29.3 16.8,28.2 M20.3,20.2 L20.3,30.8" fill="none" stroke="#a07c0c" stroke-width="1.5"/>
</svg>
<div class="x" style="left:41.05px;top:11.69px;font-size:18.2px;line-height:24px;height:24px;color:#000;transform:scaleX(0.9516)">Popup prices: 09:36:41</div>
<svg class="a" style="left:1467px;top:15px" width="16" height="16" viewBox="0 0 16 16"><path d="M0.4,0.4 L15.1,15.1 M15.1,0.4 L0.4,15.1" fill="none" stroke="#000" stroke-width="1.2"/></svg>
<div class="bd" style="left:0;top:0;width:1500px;height:1px"></div>
<div class="bd" style="left:0;top:0;width:1px;height:940px"></div>
<div class="bd" style="left:1499px;top:0;width:1px;height:940px"></div>
<div class="bd" style="left:0;top:939px;width:1500px;height:1px"></div>
<div class="a" style="left:153px;top:355px;width:255px;height:265px;background:#f0f0f0;border:1px solid #c6c6c6;"></div>
<div class="a" style="left:156px;top:471px;width:249px;height:33px;background:#0078d7;"></div>
<div class="a" style="left:157px;top:463px;width:247px;height:1px;background:#a0a0a0;"></div>
<div class="a" style="left:157px;top:464px;width:247px;height:1px;background:#fff;"></div>
<div class="a" style="left:157px;top:576px;width:247px;height:1px;background:#a0a0a0;"></div>
<div class="a" style="left:157px;top:577px;width:247px;height:1px;background:#fff;"></div>
<div class="x" style="left:198.60px;top:363.69px;font-size:18.2px;line-height:24px;height:24px;color:#000;transform:scaleX(0.9778)">Always on Top</div>
<svg class="a" style="left:172px;top:369px" width="13" height="12" viewBox="0 0 13 12"><path d="M0.9,4.6 L4.4,9.3 L10.6,1.9" fill="none" stroke="#000" stroke-width="2.7" stroke-linejoin="miter"/></svg>
<div class="x" style="left:197.67px;top:396.69px;font-size:18.2px;line-height:24px;height:24px;color:#000;transform:scaleX(0.9317)">Fullscreen</div>
<div class="x" style="left:197.64px;top:429.69px;font-size:18.2px;line-height:24px;height:24px;color:#000;transform:scaleX(0.9559)">Header</div>
<svg class="a" style="left:172px;top:435px" width="13" height="12" viewBox="0 0 13 12"><path d="M0.9,4.6 L4.4,9.3 L10.6,1.9" fill="none" stroke="#000" stroke-width="2.7" stroke-linejoin="miter"/></svg>
<div class="x" style="left:197.63px;top:476.69px;font-size:18.2px;line-height:24px;height:24px;color:#fff;transform:scaleX(0.9683)">Properties</div>
<div class="x" style="left:197.62px;top:509.69px;font-size:18.2px;line-height:24px;height:24px;color:#000;transform:scaleX(0.9824)">Show Milliseconds</div>
<div class="x" style="left:197.62px;top:542.69px;font-size:18.2px;line-height:24px;height:24px;color:#000;transform:scaleX(0.9818)">Grid</div>
<svg class="a" style="left:172px;top:548px" width="13" height="12" viewBox="0 0 13 12"><path d="M0.9,4.6 L4.4,9.3 L10.6,1.9" fill="none" stroke="#000" stroke-width="2.7" stroke-linejoin="miter"/></svg>
<div class="x" style="left:197.62px;top:589.69px;font-size:18.2px;line-height:24px;height:24px;color:#000;transform:scaleX(0.9775)">Columns</div>
<div class="a" style="left:375px;top:488px;width:756px;height:343px;background:#f0f0f0;border:1px solid #6a6a6a;"></div>
<div class="a" style="left:376px;top:489px;width:754px;height:44px;background:#fff;"></div>
<div class="x" style="left:387.02px;top:499.69px;font-size:18.2px;line-height:24px;height:24px;color:#000;transform:scaleX(0.9843)">Popup prices properties</div>
<div class="x" style="left:1021.20px;top:498.72px;font-size:21px;line-height:24px;height:24px;color:#1a1a1a;transform:scaleX(0.8000)">?</div>
<svg class="a" style="left:1088px;top:503px" width="16" height="16" viewBox="0 0 16 16"><path d="M0.4,0.4 L15.1,15.1 M15.1,0.4 L0.4,15.1" fill="none" stroke="#000" stroke-width="1.2"/></svg>
<div class="x" style="left:496.04px;top:557.93px;font-size:17.5px;line-height:24px;height:24px;color:#000;transform:scaleX(0.9565)">Show:</div>
<div class="x" style="left:453.06px;top:598.93px;font-size:17.5px;line-height:24px;height:24px;color:#000;transform:scaleX(0.9355)">Foreground:</div>
<div class="x" style="left:452.08px;top:638.93px;font-size:17.5px;line-height:24px;height:24px;color:#000;transform:scaleX(0.9167)">Background:</div>
<div class="x" style="left:504.05px;top:679.93px;font-size:17.5px;line-height:24px;height:24px;color:#000;transform:scaleX(0.9474)">Font:</div>
<div class="x" style="left:848.09px;top:598.93px;font-size:17.5px;line-height:24px;height:24px;color:#000;transform:scaleX(0.9143)">Price Up:</div>
<div class="x" style="left:827.08px;top:638.93px;font-size:17.5px;line-height:24px;height:24px;color:#000;transform:scaleX(0.9239)">Price Down:</div>
<div class="a" style="left:556px;top:557px;width:101px;height:27px;background:#fff;border:1px solid #7a7a7a;"></div>
<div class="x" style="left:563.00px;top:557.93px;font-size:17.5px;line-height:24px;height:24px;color:#000;transform:scaleX(1.0000)">3</div>
<svg class="a" style="left:638px;top:568px" width="11" height="7" viewBox="0 0 11 7"><path d="M0.35,0.5 L5.50,5.10 L10.65,0.5" fill="none" stroke="#3c3c3c" stroke-width="1.25"/></svg>
<div class="x" style="left:669.00px;top:559.93px;font-size:17.5px;line-height:24px;height:24px;color:#000;transform:scaleX(0.9257)">symbols in one line</div>
<div class="a" style="left:556px;top:597px;width:191px;height:28px;background:#fff;border:1px solid #707070;"></div>
<div class="a" style="left:721px;top:598px;width:25px;height:26px;background:#fcfdfe;"></div>
<div class="a" style="left:721px;top:598px;width:1px;height:26px;background:#e6eef8;"></div>
<div class="a" style="left:561px;top:602px;width:20px;height:18px;background:#fff;border:1px solid #a0a0a0;"></div>
<div class="x" style="left:590.00px;top:598.93px;font-size:17.5px;line-height:24px;height:24px;color:#000;transform:scaleX(0.9091)">White</div>
<svg class="a" style="left:728px;top:608px" width="11" height="7" viewBox="0 0 11 7"><path d="M0.35,0.5 L5.50,5.10 L10.65,0.5" fill="none" stroke="#3c3c3c" stroke-width="1.25"/></svg>
<div class="a" style="left:556px;top:638px;width:191px;height:28px;background:#fff;border:1px solid #707070;"></div>
<div class="a" style="left:561px;top:643px;width:20px;height:18px;background:#000;border:1px solid #a0a0a0;"></div>
<div class="x" style="left:589.14px;top:639.93px;font-size:17.5px;line-height:24px;height:24px;color:#000;transform:scaleX(0.8571)">Black</div>
<svg class="a" style="left:728px;top:649px" width="11" height="7" viewBox="0 0 11 7"><path d="M0.35,0.5 L5.50,5.10 L10.65,0.5" fill="none" stroke="#3c3c3c" stroke-width="1.25"/></svg>
<div class="a" style="left:927px;top:597px;width:191px;height:28px;background:#fff;border:1px solid #707070;"></div>
<div class="a" style="left:932px;top:602px;width:20px;height:18px;background:#0000ff;border:1px solid #a0a0a0;"></div>
<div class="x" style="left:960.12px;top:598.93px;font-size:17.5px;line-height:24px;height:24px;color:#000;transform:scaleX(0.8824)">Blue</div>
<svg class="a" style="left:1099px;top:608px" width="11" height="7" viewBox="0 0 11 7"><path d="M0.35,0.5 L5.50,5.10 L10.65,0.5" fill="none" stroke="#3c3c3c" stroke-width="1.25"/></svg>
<div class="a" style="left:927px;top:638px;width:191px;height:28px;background:#fff;border:1px solid #707070;"></div>
<div class="a" style="left:932px;top:643px;width:20px;height:18px;background:#ff0000;border:1px solid #a0a0a0;"></div>
<div class="x" style="left:960.10px;top:639.93px;font-size:17.5px;line-height:24px;height:24px;color:#000;transform:scaleX(0.9000)">Red</div>
<svg class="a" style="left:1099px;top:649px" width="11" height="7" viewBox="0 0 11 7"><path d="M0.35,0.5 L5.50,5.10 L10.65,0.5" fill="none" stroke="#3c3c3c" stroke-width="1.25"/></svg>
<div class="a" style="left:556px;top:678px;width:270px;height:27px;background:#e1e1e1;border:1px solid #adadad;"></div>
<div class="x" style="left:561.00px;top:679.93px;font-size:17.5px;line-height:24px;height:24px;color:#000;transform:scaleX(0.9048)">Tahoma</div>
<svg class="a" style="left:807px;top:689px" width="11" height="7" viewBox="0 0 11 7"><path d="M0.35,0.5 L5.50,5.10 L10.65,0.5" fill="none" stroke="#3c3c3c" stroke-width="1.25"/></svg>
<div class="a" style="left:556px;top:723px;width:20px;height:20px;background:#fff;border:1px solid #333;"></div>
<div class="x" style="left:580.12px;top:720.93px;font-size:17.5px;line-height:24px;height:24px;color:#000;transform:scaleX(0.8819)">Use custom size</div>
<div class="a" style="left:927px;top:718px;width:90px;height:27px;background:#fff;border:1px solid #d1d1d1;"></div>
<div class="a" style="left:930px;top:721px;width:58px;height:21px;background:#f0f0f0;"></div>
<div class="x" style="left:933.00px;top:718.93px;font-size:17.5px;line-height:24px;height:24px;color:#6d6d6d;transform:scaleX(1.0000)">24</div>
<svg class="a" style="left:998px;top:729px" width="11" height="7" viewBox="0 0 11 7"><path d="M0.35,0.5 L5.50,5.10 L10.65,0.5" fill="none" stroke="#9a9a9a" stroke-width="1.25"/></svg>
<div class="x" style="left:1028.07px;top:720.93px;font-size:17.5px;line-height:24px;height:24px;color:#000;transform:scaleX(0.9348)">points</div>
<div class="a" style="left:387px;top:756px;width:728px;height:1px;background:#a0a0a0;"></div>
<div class="a" style="left:387px;top:757px;width:728px;height:1px;background:#fff;"></div>
<div class="a" style="left:636px;top:774px;width:111px;height:31px;background:#e1e1e1;border:2px solid #0078d7;"></div>
<div class="x" style="left:682.00px;top:777.93px;font-size:17.5px;line-height:24px;height:24px;color:#000;transform:scaleX(0.8000)">OK</div>
<div class="a" style="left:760px;top:774px;width:111px;height:31px;background:#e1e1e1;border:1px solid #adadad;"></div>
<div class="x" style="left:792.15px;top:777.93px;font-size:17.5px;line-height:24px;height:24px;color:#000;transform:scaleX(0.8491)">Cancel</div>
<svg class="a" style="left:320px;top:480px" width="190" height="120" viewBox="320 480 190 120">
<defs><linearGradient id="gA" gradientUnits="userSpaceOnUse" x1="334" y1="493" x2="362" y2="532"><stop offset="0" stop-color="#ff0000" stop-opacity="0"/><stop offset="0.25" stop-color="#ff0000" stop-opacity="0.25"/><stop offset="1" stop-color="#ff0000" stop-opacity="1"/></linearGradient></defs>
<path d="M335,494 C352,528 400,568 473,571" fill="none" stroke="url(#gA)" stroke-width="6"/>
<path d="M472,562 L489.5,571 L472,580 Z" fill="#ff0000"/>
</svg>
</div>
</body></html>
